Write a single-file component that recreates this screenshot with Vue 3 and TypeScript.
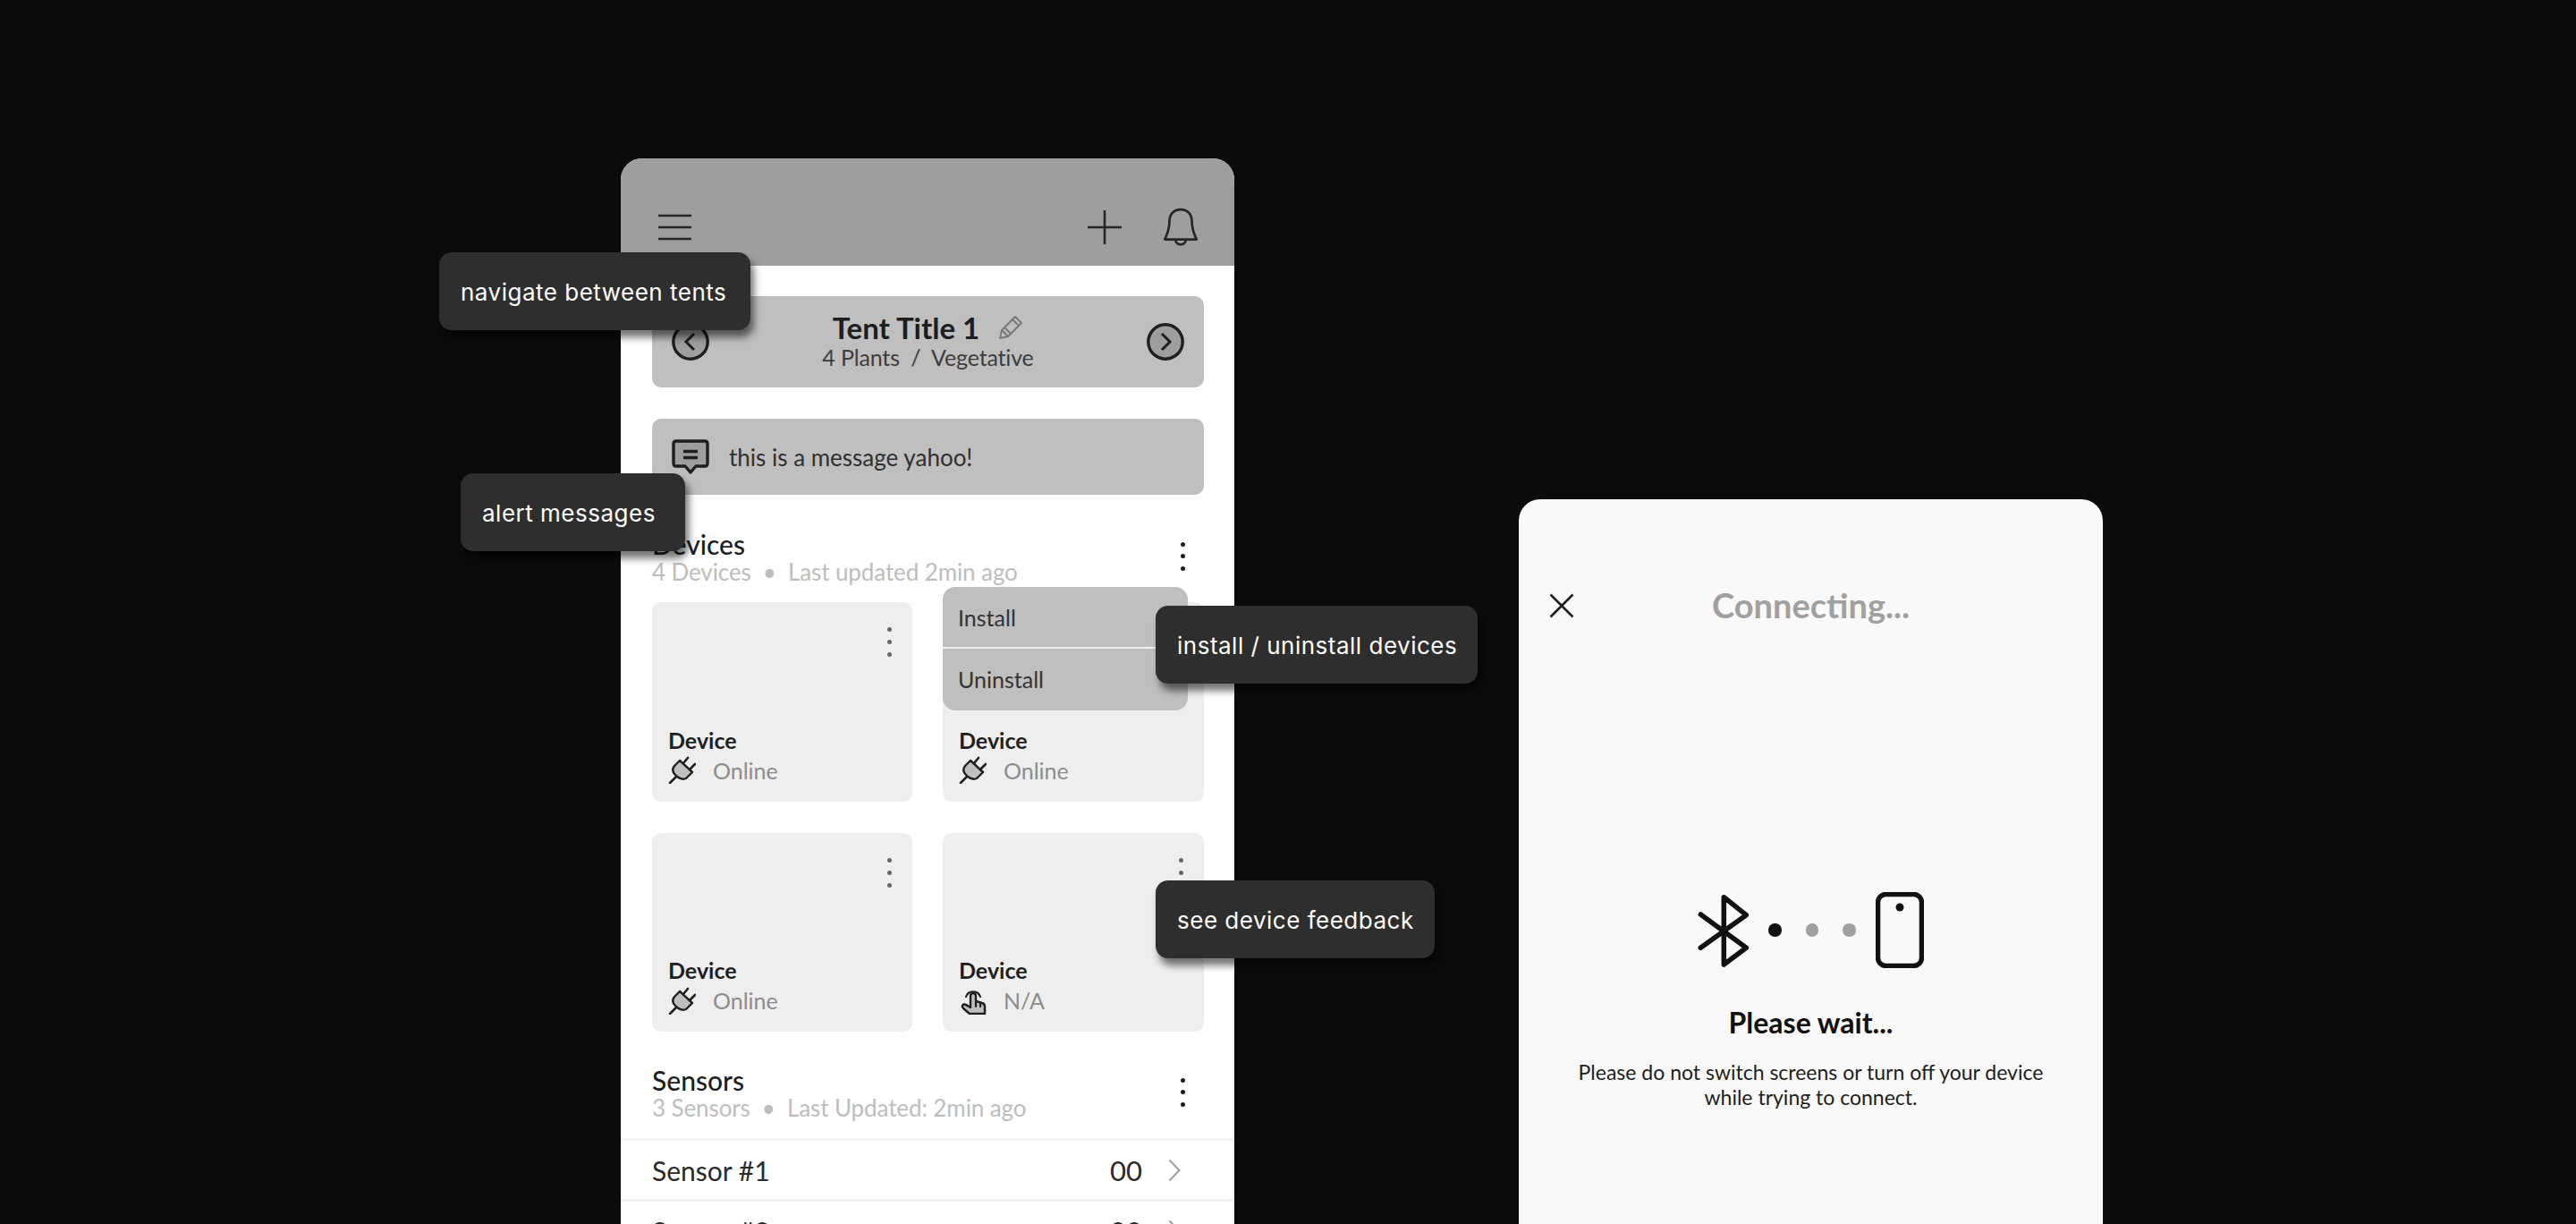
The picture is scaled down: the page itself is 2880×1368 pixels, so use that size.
<script setup lang="ts">
interface Device { status: string; icon: 'plug' | 'hand' }
const devices: Device[] = [
  { status: 'Online', icon: 'plug' },
  { status: 'Online', icon: 'plug' },
  { status: 'Online', icon: 'plug' },
  { status: 'N/A', icon: 'hand' },
]
const sensors = ['Sensor #1', 'Sensor #2']
</script>

<template>
  <main class="canvas">
    <section class="phone">
      <header class="topbar">
        <svg class="ic-menu" width="37" height="30" viewBox="0 0 37 30"><path d="M0 2H37M0 15H37M0 28H37" /></svg>
        <span class="topbar-right">
          <svg class="ic-line" width="38" height="38" viewBox="0 0 38 38"><path d="M0.500 19H37.500M19 0.500V37.500" /></svg>
          <svg class="ic-line" width="40" height="44" viewBox="0 0 38 42"><path d="M7 15C7 7 12 2 19 2C26 2 31 7 31 15C31 24 33 27 36 34H2C5 27 7 24 7 15ZM13.500 34.500C14 41 24 41 24.500 34.500" /></svg>
        </span>
      </header>

      <div class="body">
        <div class="tent">
          <svg class="circ" width="42" height="42" viewBox="0 0 42 42"><circle cx="21" cy="21" r="19.200" /><path d="M25 12L16 21L25 30" /></svg>
          <div class="tent-text">
            <div class="tent-title">
              <span>Tent Title 1</span>
              <svg class="pencil" width="28" height="28" viewBox="0 0 28 28"><path d="M2 26L4 17L19 2L26 9L11 24ZM4 17L11 24M7 14L14 21M16 5L23 12" /></svg>
            </div>
            <div class="tent-sub">4 Plants&nbsp; /&nbsp; Vegetative</div>
          </div>
          <svg class="circ" width="42" height="42" viewBox="0 0 42 42"><circle cx="21" cy="21" r="19.200" /><path d="M17 12L26 21L17 30" /></svg>
        </div>

        <div class="message">
          <svg width="42" height="40" viewBox="0 0 42 40"><path class="msg-body" d="M5 2H37C39 2 40 3 40 5V27C40 29 39 30 37 30H27L21 37L15 30H5C3 30 2 29 2 27V5C2 3 3 2 5 2Z" /><path class="msg-bars" d="M13 13.500H29M13 20.500H29" /></svg>
          <span>this is a message yahoo!</span>
        </div>

        <div class="sec-head devices-head">
          <div>
            <div class="sec-title">Devices</div>
            <div class="sec-sub">4 Devices&nbsp; •&nbsp; Last updated 2min ago</div>
          </div>
          <span class="kebab big"><i /><i /><i /></span>
        </div>

        <div class="grid">
          <article v-for="(d, i) in devices" :key="i" class="card">
            <span class="kebab"><i /><i /><i /></span>
            <div class="card-name">Device</div>
            <div class="card-status">
              <svg v-if="d.icon === 'plug'" class="dev-ic" width="31" height="31" viewBox="0 0 31 31">
                <path class="fill" d="M13 5L27 18L20 25Q15 27 10 23L8 21Q3 16 7 11Z" />
                <path class="st" d="M17 8L22 2M24 15L30 9M9 23L2 30" />
              </svg>
              <svg v-else class="dev-ic" width="31" height="31" viewBox="0 0 31 31">
                <path class="fill" d="M13 10A3 3 0 0 1 19 10V16L26 18C28 18.500 29 20 29 22V30H12L5 24C3 22 4 19 6.500 19.500C9 20 11 22 13 23Z" />
                <path class="st thin" d="M8 11A8.500 8.500 0 0 1 24 11M19 16V22M24 17.500V22" />
              </svg>
              <span>{{ d.status }}</span>
            </div>
          </article>
          <div class="dropdown">
            <div>Install</div>
            <div>Uninstall</div>
          </div>
        </div>

        <div class="sec-head sensors-head">
          <div>
            <div class="sec-title">Sensors</div>
            <div class="sec-sub">3 Sensors&nbsp; •&nbsp; Last Updated: 2min ago</div>
          </div>
          <span class="kebab big"><i /><i /><i /></span>
        </div>
      </div>

      <div v-for="s in sensors" :key="s" class="sensor">
        <span>{{ s }}</span>
        <span class="sensor-val">00</span>
        <svg width="14" height="26" viewBox="0 0 14 26"><path d="M1.500 1.500L12.500 13L1.500 24.500" /></svg>
      </div>
    </section>

    <section class="modal">
      <div class="modal-head">
        <svg width="28" height="28" viewBox="0 0 28 28"><path d="M1.500 1.500L26.500 26.500M26.500 1.500L1.500 26.500" /></svg>
        <h2>Connecting...</h2>
      </div>
      <div class="pairing">
        <svg width="58" height="82" viewBox="0 0 58 82"><path d="M3.300 23L54.300 60.300L29.300 79V3.700L54.300 23.700L3.300 60.300" /></svg>
        <span class="dots"><i class="on" /><i /><i /></span>
        <svg width="54" height="85" viewBox="0 0 54 85"><rect x="2.500" y="2.500" width="49" height="80" rx="9" class="ph" /><circle cx="27" cy="17" r="4.500" class="ph-dot" /></svg>
      </div>
      <h3>Please wait...</h3>
      <p>Please do not switch screens or turn off your device<br />while trying to connect.</p>
    </section>

    <div class="tip tip-nav">navigate between tents</div>
    <div class="tip tip-alert">alert messages</div>
    <div class="tip tip-install">install / uninstall devices</div>
    <div class="tip tip-feedback">see device feedback</div>
  </main>
</template>

<style>
html, body { margin: 0; background: #0b0b0b; }
</style>

<style scoped>
.canvas {
  position: relative;
  width: 2880px;
  height: 1368px;
  overflow: hidden;
  background: #0b0b0b;
  font-family: Lato, "Liberation Sans", sans-serif;
}
.phone {
  position: absolute;
  left: 694px;
  top: 177px;
  width: 686px;
  height: 1300px;
  background: #fff;
  border-radius: 24px 24px 0 0;
  overflow: hidden;
}
.topbar {
  height: 120px;
  box-sizing: border-box;
  background: #9e9e9e;
  display: flex;
  align-items: center;
  justify-content: space-between;
  padding: 33px 40px 0 42px;
}
.ic-menu path, .ic-line path { fill: none; stroke: #262626; stroke-width: 2.6; }
.ic-line path { stroke-linejoin: round; stroke-linecap: round; }
.topbar-right { display: flex; align-items: center; gap: 46px; }
.body { padding: 34px 34px 0 35px; }
.tent {
  height: 102px;
  border-radius: 10px;
  background: #bfbfbf;
  display: flex;
  align-items: center;
  justify-content: space-between;
  padding: 0 22px;
}
.circ circle { fill: #9e9e9e; stroke: #1f1f1f; stroke-width: 3.4; }
.circ path { fill: none; stroke: #1f1f1f; stroke-width: 3; }
.tent-text { text-align: center; margin-top: -1px; }
.tent-title {
  display: flex;
  justify-content: center;
  align-items: center;
  gap: 21px;
  font-size: 33px;
  line-height: 34px;
  font-weight: 700;
  color: #1d1d1d;
}
.pencil path { fill: none; stroke: #767676; stroke-width: 1.8; stroke-linejoin: round; }
.tent-sub { margin-top: 2px; font-size: 25px; line-height: 29px; letter-spacing: -0.15px; color: #3d3d3d; }
.message {
  margin-top: 35px;
  height: 85px;
  border-radius: 10px;
  background: #bfbfbf;
  display: flex;
  align-items: center;
  padding: 0 0 0 22px;
  gap: 22px;
  font-size: 26px;
  color: #2f2f2f;
}
.msg-body { fill: #9e9e9e; stroke: #1f1f1f; stroke-width: 3.4; stroke-linejoin: round; }
.msg-bars { fill: none; stroke: #1f1f1f; stroke-width: 3.4; }
.sec-head {
  display: flex;
  justify-content: space-between;
  align-items: center;
}
.devices-head { margin-top: 38px; padding-right: 21px; }
.sensors-head { margin-top: 37px; padding: 0 21px 20px 0; }
.sec-title { font-size: 30px; line-height: 34px; color: #1d1d1d; font-weight: 500; }
.sec-sub { font-size: 26px; line-height: 28px; letter-spacing: -0.1px; color: #bdbdbd; }
.kebab {
  display: flex;
  flex-direction: column;
  gap: 9px;
  color: #666;
}
.kebab i { width: 5px; height: 5px; border-radius: 50%; background: currentColor; display: block; }
.kebab.big { gap: 8.500px; color: #1d1d1d; margin-top: -1px; }
.grid {
  position: relative;
  margin-top: 20px;
  display: grid;
  grid-template-columns: 291px 292px;
  grid-auto-rows: 222.500px;
  column-gap: 34px;
  row-gap: 35px;
}
.card {
  position: relative;
  background: #eeeeee;
  border-radius: 10px;
  display: flex;
  flex-direction: column;
  justify-content: flex-end;
  padding: 0 18px 18px;
}
.card > .kebab { position: absolute; top: 28px; right: 23px; }
.card-name { font-size: 25px; line-height: 30px; margin-bottom: 2px; font-weight: 700; color: #1f1f1f; }
.card-status {
  display: flex;
  align-items: center;
  gap: 19px;
  font-size: 25px;
  line-height: 34px;
  color: #8c8c8c;
}
.dev-ic { flex: none; }
.dev-ic .fill { fill: #bfbfbf; stroke: #1f1f1f; stroke-width: 2.4; stroke-linejoin: round; }
.dev-ic .st { fill: none; stroke: #1f1f1f; stroke-width: 2.6; stroke-linecap: round; }
.dev-ic .thin { stroke-width: 2.2; }
.dropdown {
  position: absolute;
  top: -17px;
  left: 325px;
  width: 274px;
  height: 138px;
  border-radius: 14px;
  overflow: hidden;
  background: #bfbfbf;
  display: flex;
  flex-direction: column;
  font-size: 25px;
  color: #333;
}
.dropdown div {
  flex: 1;
  display: flex;
  align-items: center;
  padding-left: 17px;
}
.dropdown div + div { border-top: 2px solid #f0f0f0; padding-bottom: 2px; }
.sensor {
  height: 68px;
  box-sizing: border-box;
  border-top: 3px solid #f3f3f3;
  display: flex;
  align-items: center;
  padding: 0 60px 0 35px;
  font-size: 30px;
  color: #2a2a2a;
}
.sensor-val { margin-left: auto; margin-right: 29px; font-size: 31px; }
.sensor path { fill: none; stroke: #9e9e9e; stroke-width: 2; }

.modal {
  position: absolute;
  left: 1698px;
  top: 558px;
  width: 653px;
  height: 900px;
  background: #f9f9f9;
  border-radius: 24px 24px 0 0;
  box-sizing: border-box;
  padding-top: 105px;
}
.modal-head {
  position: relative;
  display: flex;
  justify-content: center;
}
.modal-head svg { position: absolute; left: 34px; top: 0; }
.modal-head path { fill: none; stroke: #1f1f1f; stroke-width: 2.6; }
.modal h2 {
  margin: -8px 0 0;
  font-size: 38px;
  line-height: 42px;
  font-weight: 700;
  color: #a0a0a0;
}
.pairing {
  margin-top: 300px;
  display: flex;
  align-items: center;
  justify-content: center;
}
.pairing svg:first-child path { fill: none; stroke: #111; stroke-width: 5.500; stroke-linejoin: round; stroke-linecap: round; }
.ph { fill: none; stroke: #111; stroke-width: 5.500; }
.ph-dot { fill: #111; }
.dots { display: flex; gap: 27px; margin: 0 22px 0 21px; }
.dots i { display: block; width: 14.500px; height: 14.500px; border-radius: 50%; background: #a0a0a0; }
.dots i.on { background: #111; }
.modal h3 {
  margin: 41px 0 0;
  text-align: center;
  font-size: 32px;
  line-height: 40px;
  font-weight: 700;
  color: #111;
}
.modal p {
  margin: 21px 0 0;
  text-align: center;
  font-size: 23px;
  line-height: 28px;
  color: #1d1d1d;
}

.tip {
  position: absolute;
  box-sizing: border-box;
  height: 87px;
  display: flex;
  align-items: center;
  padding: 2px 0 0 24px;
  border-radius: 14px;
  background: #2e2e2e;
  color: #fff;
  font-family: Inter, "Liberation Sans", sans-serif;
  font-size: 26px;
  letter-spacing: 0.5px;
  white-space: nowrap;
  box-shadow: 4px 8px 8px rgba(0, 0, 0, 0.55);
}
.tip-nav { left: 491px; top: 282px; width: 348px; }
.tip-alert { left: 515px; top: 529px; width: 251px; }
.tip-install { left: 1292px; top: 677px; width: 360px; }
.tip-feedback { left: 1292px; top: 984px; width: 312px; }
</style>
